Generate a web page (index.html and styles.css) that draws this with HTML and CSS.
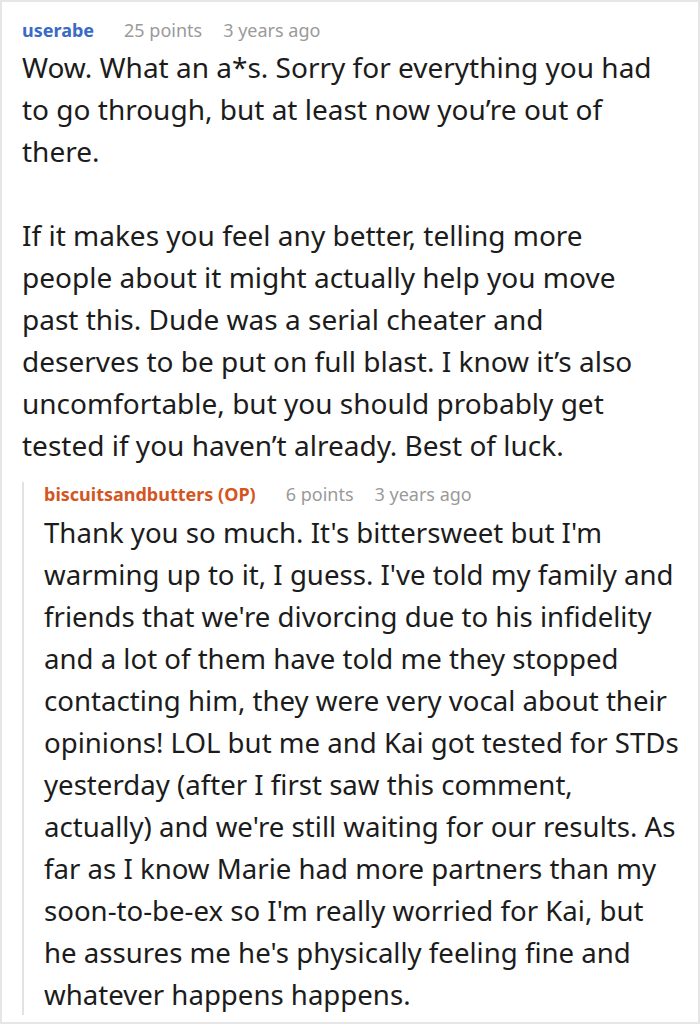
FILE: index.html
```html
<!DOCTYPE html>
<html>
<head>
<meta charset="utf-8">
<link rel="stylesheet" href="styles.css">
</head>
<body>
<div class="frame">
  <div class="comment">
    <div class="meta">
      <span class="user">userabe</span>
      <span class="info">25 points</span>
      <span class="info">3 years ago</span>
    </div>
    <div class="body">
      <p>Wow. What an a*s. Sorry for everything you had to go through, but at least now you’re out of there.</p>
      <p>If it makes you feel any better, telling more people about it might actually help you move past this. Dude was a serial cheater and deserves to be put on full blast. I know it’s also uncomfortable, but you should probably get tested if you haven’t already. Best of luck.</p>
    </div>
    <div class="reply">
      <div class="meta">
        <span class="user op">biscuitsandbutters (OP)</span>
        <span class="info">6 points</span>
        <span class="info">3 years ago</span>
      </div>
      <div class="body lines">
        <span class="ln">Thank you so much. It's bittersweet but I'm</span>
        <span class="ln">warming up to it, I guess. I've told my family and</span>
        <span class="ln">friends that we're divorcing due to his infidelity</span>
        <span class="ln">and a lot of them have told me they stopped</span>
        <span class="ln">contacting him, they were very vocal about their</span>
        <span class="ln">opinions! LOL but me and Kai got tested for STDs</span>
        <span class="ln">yesterday (after I first saw this comment,</span>
        <span class="ln">actually) and we're still waiting for our results. As</span>
        <span class="ln">far as I know Marie had more partners than my</span>
        <span class="ln">soon-to-be-ex so I'm really worried for Kai, but</span>
        <span class="ln">he assures me he's physically feeling fine and</span>
        <span class="ln">whatever happens happens.</span>
      </div>
    </div>
  </div>
</div>
</body>
</html>
```
FILE: styles.css
```css
html, body {
  margin: 0;
  padding: 0;
  background: #fff;
}
.frame {
  box-sizing: border-box;
  width: 700px;
  height: 1024px;
  border: 2px solid #e6e6e6;
  overflow: hidden;
  font-family: "Noto Sans", sans-serif;
  color: #1c1c1c;
}
.comment {
  padding: 16px 40px 0 20px;
}
.meta {
  display: flex;
  align-items: baseline;
  gap: 21px;
  font-size: 18px;
  line-height: 24px;
  white-space: nowrap;
}
.user {
  font-weight: bold;
  color: #3a6bc4;
  margin-right: 9px;
}
.user.op {
  color: #d4561f;
}
.info {
  color: #9a9a9a;
}
.body {
  font-size: 28px;
  line-height: 42px;
  margin-top: 4px;
}
.body p {
  margin: 0 0 42px 0;
}
.body p:last-child {
  margin-bottom: 0;
}
.lines {
  font-size: 27.6px;
}
.lines .ln {
  display: block;
  white-space: nowrap;
}
.reply {
  margin-top: 26px;
  margin-bottom: -10px;
  border-left: 2px solid #e2e2e2;
  padding-left: 20px;
}
.reply .meta {
  margin-top: -10px;
}
.reply .body {
  margin-top: 5px;
  margin-bottom: -10px;
}
```
